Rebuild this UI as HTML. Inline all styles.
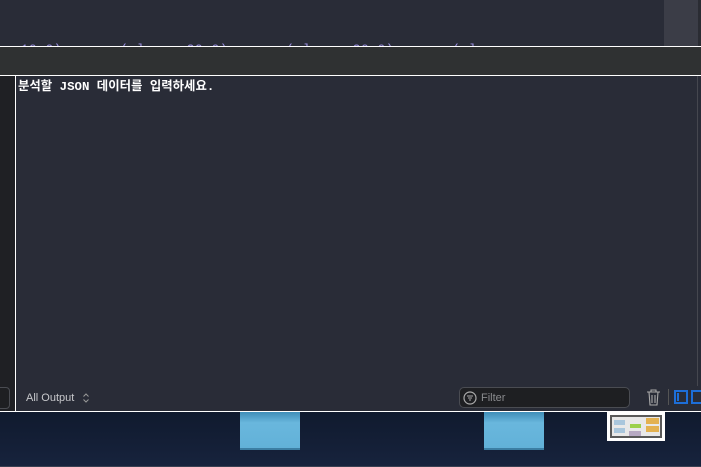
<!DOCTYPE html>
<html><head><meta charset="utf-8"><style>
*{margin:0;padding:0;box-sizing:border-box}
html,body{width:701px;height:467px;overflow:hidden;background:#131c30;font-family:"Liberation Sans","Noto Sans CJK KR",sans-serif}
.abs{position:absolute}
</style></head><body>
<div class="abs" style="left:0;top:0;width:701px;height:46px;background:#292c37"></div>
<div class="abs" style="left:664px;top:0;width:34px;height:46px;background:#3b3d47"></div>
<div class="abs" style="left:698px;top:0;width:3px;height:46px;background:#2a2c33"></div>
<div class="abs" style="left:0;top:42px;width:664px;height:4px;overflow:hidden">
 <div style="position:absolute;top:0px;left:4px;font:13px 'Liberation Mono',monospace;color:#9a8fe0;white-space:pre;letter-spacing:0.5px">· 10.0)       ( l  ·  20.0)       ( l  ·  20.0)       ( l  ·</div>
</div>
<div class="abs" style="left:0;top:46px;width:701px;height:1px;background:#fff"></div>
<div class="abs" style="left:0;top:47px;width:701px;height:28px;background:#2f3132"></div>
<div class="abs" style="left:0;top:75px;width:701px;height:1px;background:#fff"></div>
<div class="abs" style="left:0;top:76px;width:701px;height:335px;background:#292c37"></div>
<div class="abs" style="left:0;top:76px;width:15px;height:335px;background:#1f2024"></div>
<div class="abs" style="left:15px;top:76px;width:1px;height:335px;background:#fff"></div>
<div class="abs" style="left:697px;top:76px;width:1px;height:310px;background:#45474f"></div>
<div class="abs" style="left:18px;top:76px;font:bold 12.4px 'Liberation Mono','Noto Sans CJK KR',monospace;color:#fff;white-space:pre">분석할 JSON 데이터를 입력하세요.</div>
<div class="abs" style="left:-4px;top:387px;width:14px;height:22px;border:1px solid #4a4c52;border-radius:4px;background:#1e1f22"></div>
<div class="abs" style="left:26px;top:391px;font-size:11px;line-height:14px;color:#c8c9cc">All Output</div>
<svg class="abs" style="left:82px;top:392px" width="8" height="12" viewBox="0 0 8 12"><path d="M1.5 4.5L4 2l2.5 2.5M1.5 7.5L4 10l2.5-2.5" fill="none" stroke="#999" stroke-width="1"/></svg>
<div class="abs" style="left:459px;top:387px;width:171px;height:21px;border:1px solid #4a4c52;border-radius:5px;background:#1e1f22"></div>
<svg class="abs" style="left:463px;top:391px" width="14" height="14" viewBox="0 0 14 14"><circle cx="7" cy="7" r="6" fill="none" stroke="#aaa" stroke-width="1.2"/><path d="M4 5h6M5 7h4M6 9h2" stroke="#aaa" stroke-width="1.1"/></svg>
<div class="abs" style="left:481px;top:391px;font-size:11px;line-height:14px;color:#8a8b8e">Filter</div>
<svg class="abs" style="left:646px;top:389px" width="15" height="17" viewBox="0 0 15 17"><path d="M1 3h13M5 3V1h5v2M3 3l1 13h7l1-13M6 6v8M9 6v8" fill="none" stroke="#aaa" stroke-width="1.1"/></svg>
<div class="abs" style="left:668px;top:389px;width:1px;height:16px;background:#555"></div>
<div class="abs" style="left:674px;top:390px;width:14px;height:14px;border:2px solid #1d6ed8"></div>
<div class="abs" style="left:677px;top:393px;width:2px;height:8px;background:#1d6ed8"></div>
<div class="abs" style="left:691px;top:390px;width:14px;height:14px;border:2px solid #1d6ed8"></div>
<div class="abs" style="left:0;top:411px;width:701px;height:1px;background:#fff"></div>
<div class="abs" style="left:0;top:412px;width:701px;height:55px;background:linear-gradient(#101a2e,#17233d)"></div>
<div class="abs" style="left:0;top:466px;width:701px;height:1px;background:#3a4052"></div>
<div class="abs" style="left:240px;top:412px;width:60px;height:38px;background:linear-gradient(#3f8db8,#69b7dd 30%,#62b1d8);border-bottom:2px solid #3c7ea3"></div>
<div class="abs" style="left:484px;top:412px;width:60px;height:38px;background:linear-gradient(#3f8db8,#69b7dd 30%,#62b1d8);border-bottom:2px solid #3c7ea3"></div>
<div class="abs" style="left:607px;top:412px;width:58px;height:29px;background:#fff;padding:3px">
 <div style="position:relative;width:52px;height:23px;background:#595959;padding:2px">
  <div style="position:relative;width:48px;height:19px;background:#e8e8e8">
   <div class="abs" style="left:2px;top:3px;width:11px;height:5px;background:#a9c6dc"></div>
   <div class="abs" style="left:2px;top:11px;width:11px;height:5px;background:#a9c6dc"></div>
   <div class="abs" style="left:18px;top:7px;width:11px;height:4px;background:#9bd04a"></div>
   <div class="abs" style="left:17px;top:14px;width:12px;height:5px;background:#b7a9c3"></div>
   <div class="abs" style="left:34px;top:1px;width:13px;height:6px;background:#e3b150"></div>
   <div class="abs" style="left:34px;top:9px;width:13px;height:6px;background:#e3b150"></div>
  </div>
 </div>
</div>
</body></html>
